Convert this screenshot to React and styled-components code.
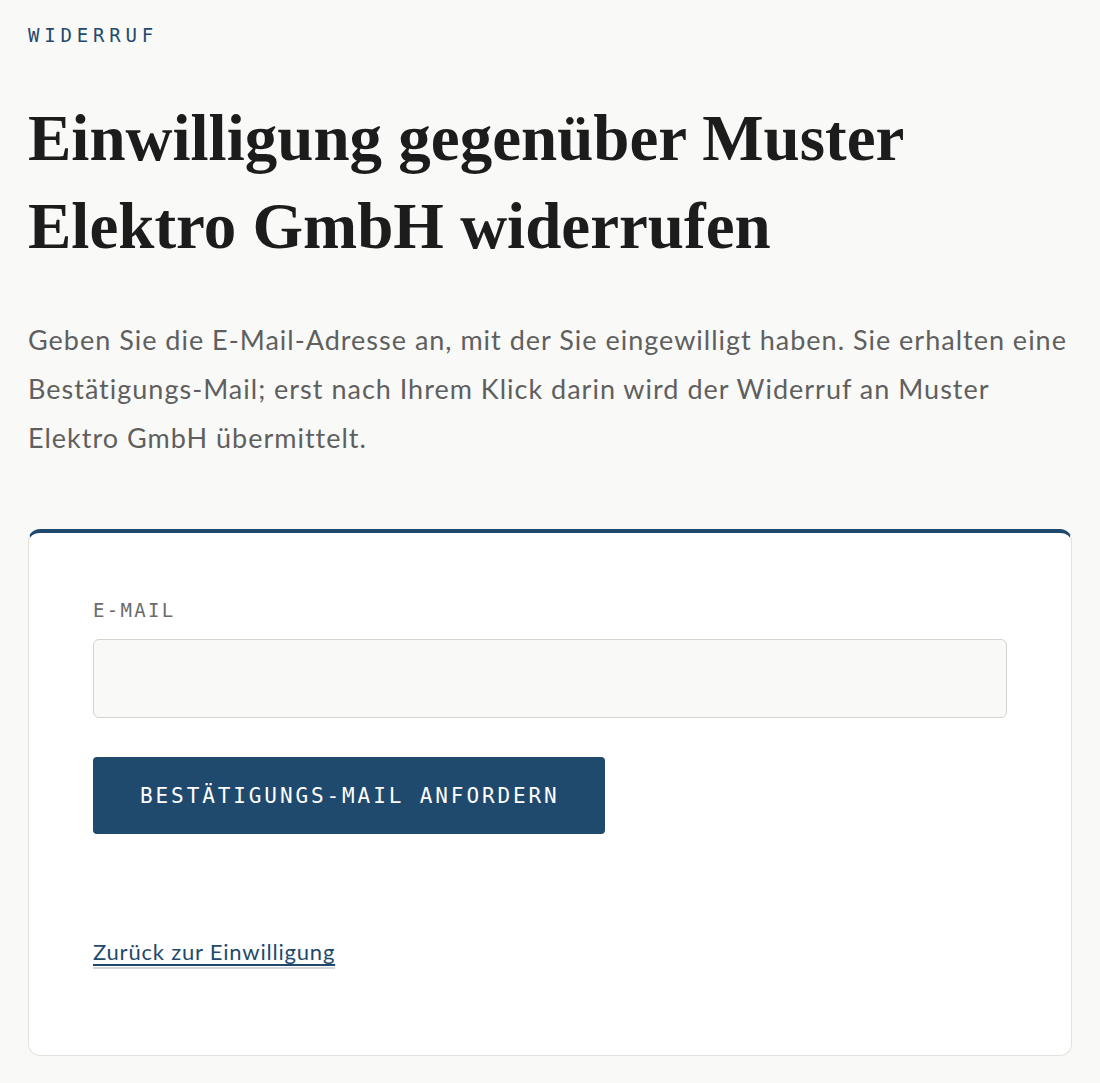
import React from 'react';
import styled, { createGlobalStyle } from 'styled-components';

const GlobalStyle = createGlobalStyle`
  html, body {
    margin: 0;
    padding: 0;
    background: #f9f9f7;
  }
  body {
    font-family: Lato, "Liberation Sans", sans-serif;
    color: #1c1c1c;
  }
  * { box-sizing: border-box; }
`;

const Page = styled.main`
  padding: 22px 28px 28px;
  display: flex;
  flex-direction: column;
`;

const Eyebrow = styled.div`
  font-family: "DejaVu Sans Mono", "Liberation Mono", monospace;
  font-size: 19px;
  letter-spacing: 4.8px;
  color: #1f4a6e;
  line-height: 26px;
`;

const Title = styled.h1`
  margin: 46px 0 0;
  font-family: "Liberation Serif", serif;
  font-weight: 700;
  font-size: 65px;
  line-height: 88px;
  color: #1c1c1c;
`;

const Intro = styled.p`
  margin: 45px 0 0;
  font-size: 27px;
  letter-spacing: 1px;
  line-height: 49px;
  color: #5f5f5f;
`;

const Card = styled.section`
  margin-top: 67px;
  background: #fff;
  border: 1px solid #e4e2dc;
  border-top: 4px solid #1f4a6e;
  border-radius: 12px;
  padding: 64px 64px 86px;
  display: flex;
  flex-direction: column;
`;

const Label = styled.label`
  font-family: "DejaVu Sans Mono", "Liberation Mono", monospace;
  font-size: 19px;
  letter-spacing: 2.3px;
  color: #6b6b6b;
  line-height: 26px;
`;

const Input = styled.input`
  margin-top: 16px;
  height: 79px;
  width: 100%;
  background: #f9f9f7;
  border: 1.5px solid #d5d3cc;
  border-radius: 6px;
  padding: 0 20px;
  font-size: 22px;
  font-family: inherit;
  outline: none;
`;

const Button = styled.button`
  margin-top: 39px;
  align-self: flex-start;
  height: 77px;
  padding: 0 45px 0 47px;
  background: #1f4a6e;
  border: none;
  border-radius: 4px;
  color: #fff;
  font-family: "DejaVu Sans Mono", "Liberation Mono", monospace;
  font-size: 21px;
  letter-spacing: 2.9px;
  cursor: pointer;
`;

const BackLink = styled.a`
  margin-top: 103px;
  align-self: flex-start;
  font-size: 22px;
  letter-spacing: 0.8px;
  line-height: 30px;
  color: #1f4a6e;
  text-decoration: underline;
  text-decoration-thickness: 1.5px;
  text-underline-offset: 4px;
  border-bottom: 2px solid #d6d6d6;
  cursor: pointer;
`;

export default function App() {
  return (
    <>
      <GlobalStyle />
      <Page>
        <Eyebrow>WIDERRUF</Eyebrow>
        <Title>Einwilligung gegenüber Muster Elektro GmbH widerrufen</Title>
        <Intro>
          Geben Sie die E-Mail-Adresse an, mit der Sie eingewilligt haben. Sie erhalten eine
          Bestätigungs-Mail; erst nach Ihrem Klick darin wird der Widerruf an Muster
          Elektro GmbH übermittelt.
        </Intro>
        <Card>
          <Label htmlFor="email">E-MAIL</Label>
          <Input id="email" type="email" />
          <Button type="button">BESTÄTIGUNGS-MAIL ANFORDERN</Button>
          <BackLink href="#">Zurück zur Einwilligung</BackLink>
        </Card>
      </Page>
    </>
  );
}
